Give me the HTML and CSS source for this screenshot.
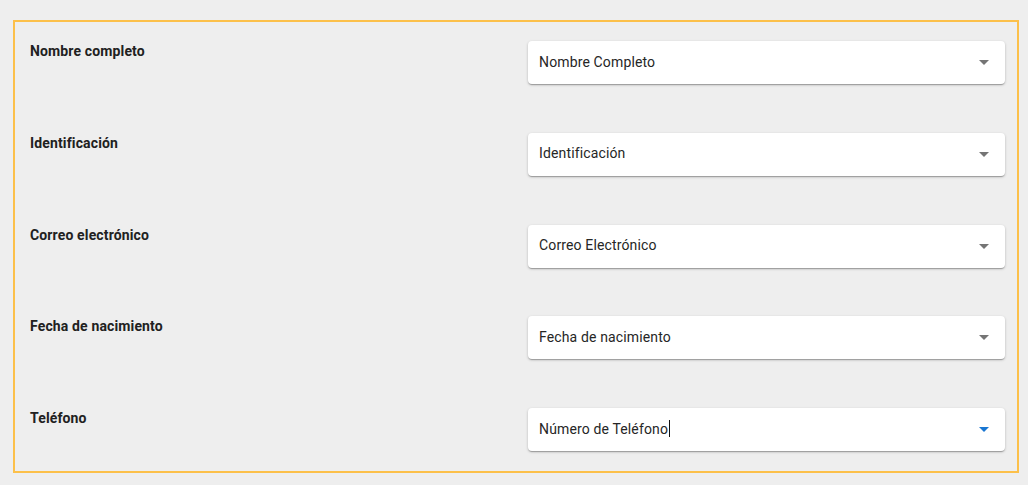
FILE: index.html
```html
<!DOCTYPE html>
<html lang="es">
<head>
<meta charset="utf-8">
<title>Formulario</title>
<link rel="stylesheet" href="styles.css">
</head>
<body>
<div class="panel">
  <div class="row">
    <div class="label">Nombre completo</div>
    <div class="select"><span class="value">Nombre Completo</span><span class="arrow"></span></div>
  </div>
  <div class="row">
    <div class="label">Identificación</div>
    <div class="select"><span class="value">Identificación</span><span class="arrow"></span></div>
  </div>
  <div class="row">
    <div class="label">Correo electrónico</div>
    <div class="select"><span class="value">Correo Electrónico</span><span class="arrow"></span></div>
  </div>
  <div class="row">
    <div class="label">Fecha de nacimiento</div>
    <div class="select"><span class="value">Fecha de nacimiento</span><span class="arrow"></span></div>
  </div>
  <div class="row">
    <div class="label">Teléfono</div>
    <div class="select"><span class="value">Número de Teléfono<span class="caret"></span></span><span class="arrow active"></span></div>
  </div>
</div>
</body>
</html>
```
FILE: styles.css
```css
html, body {
  margin: 0;
  padding: 0;
  background: #eeeeee;
  font-family: Roboto, "Noto Sans", sans-serif;
  color: #222222;
}
body {
  padding: 20px 9px 0 13px;
  width: 1006px;
}
.panel {
  border: 2px solid #fcc04a;
  padding: 19px 12px 20px 15px;
  display: flex;
  flex-direction: column;
  gap: 48.75px;
}
.row {
  display: flex;
  align-items: flex-start;
}
.label {
  flex: 1;
  font-size: 14px;
  font-weight: 700;
  line-height: 20px;
  letter-spacing: 0.14px;
  color: #212121;
}
.select {
  width: 477px;
  height: 43px;
  background: #ffffff;
  border-radius: 4px;
  box-shadow: 0 1px 3px rgba(0,0,0,0.2), 0 1px 1px rgba(0,0,0,0.14), 0 2px 1px -1px rgba(0,0,0,0.12);
  display: flex;
  align-items: center;
  padding: 0 16px 0 11px;
  box-sizing: border-box;
}
.value {
  flex: 1;
  font-size: 14px;
  letter-spacing: 0.14px;
  color: #262626;
  display: flex;
  align-items: center;
  padding-bottom: 2px;
}
.caret {
  display: inline-block;
  width: 1px;
  height: 17px;
  background: #111;
  margin-left: 1px;
}
.arrow {
  width: 0;
  height: 0;
  border-left: 5px solid transparent;
  border-right: 5px solid transparent;
  border-top: 5px solid #757575;
}
.arrow.active {
  border-top-color: #1976d2;
}
```
